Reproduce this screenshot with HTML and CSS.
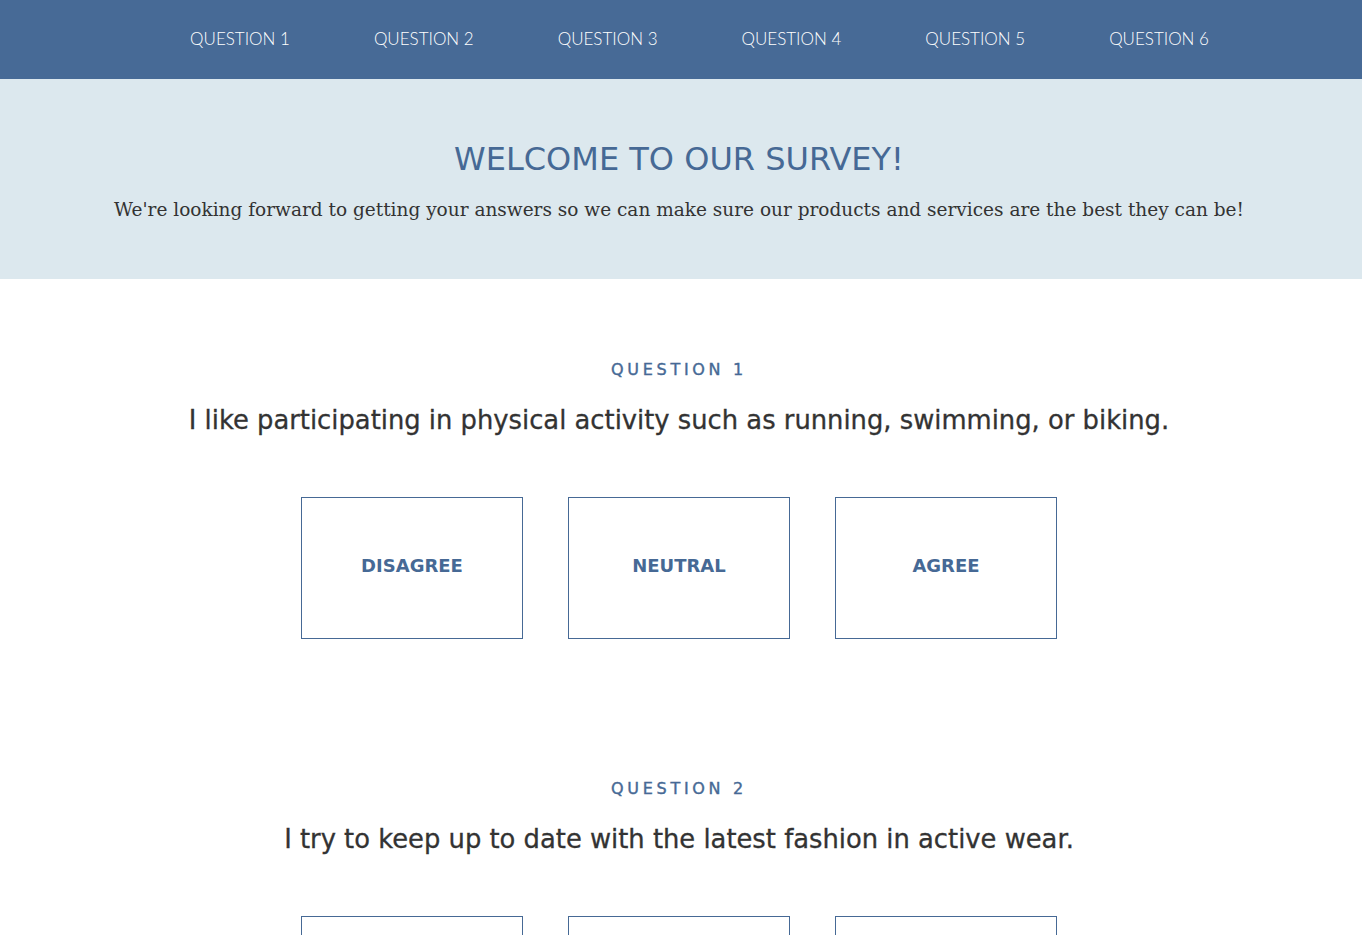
FILE: index.html
```html
<!DOCTYPE html>
<html>
<head>
<meta charset="utf-8">
<link rel="stylesheet" href="styles.css">
</head>
<body>
<nav class="topnav">
  <ul class="nav-list">
    <li><a href="#q1">QUESTION 1</a></li>
    <li><a href="#q2">QUESTION 2</a></li>
    <li><a href="#q3">QUESTION 3</a></li>
    <li><a href="#q4">QUESTION 4</a></li>
    <li><a href="#q5">QUESTION 5</a></li>
    <li><a href="#q6">QUESTION 6</a></li>
  </ul>
</nav>
<header class="hero">
  <h1 class="hero-title">WELCOME TO OUR SURVEY!</h1>
  <p class="hero-sub">We're looking forward to getting your answers so we can make sure our products and services are the best they can be!</p>
</header>
<main>
  <section class="question" id="q1">
    <h2 class="q-label">QUESTION 1</h2>
    <h3 class="q-text">I like participating in physical activity such as running, swimming, or biking.</h3>
    <div class="answers">
      <div class="answer">DISAGREE</div>
      <div class="answer">NEUTRAL</div>
      <div class="answer">AGREE</div>
    </div>
  </section>
  <section class="question" id="q2">
    <h2 class="q-label">QUESTION 2</h2>
    <h3 class="q-text">I try to keep up to date with the latest fashion in active wear.</h3>
    <div class="answers">
      <div class="answer">DISAGREE</div>
      <div class="answer">NEUTRAL</div>
      <div class="answer">AGREE</div>
    </div>
  </section>
</main>
</body>
</html>
```
FILE: styles.css
```css
* { box-sizing: border-box; }
body {
  margin: 0;
  font-family: "DejaVu Sans", sans-serif;
  color: #333;
  background: #fff;
}
.topnav {
  background: #476a96;
  height: 79px;
  display: flex;
  align-items: center;
  justify-content: center;
  padding-left: 37px;
  padding-bottom: 2px;
}
.nav-list {
  list-style: none;
  margin: 0;
  padding: 0;
  display: flex;
  gap: 84px;
}
.nav-list a {
  color: #fff;
  text-decoration: none;
  font-family: Lato, sans-serif;
  font-weight: 300;
  font-size: 17px;
}
.hero {
  background: #dce8ee;
  height: 200px;
  text-align: center;
  padding-top: 61px;
  padding-right: 4px;
}
.hero-title {
  margin: 0;
  font-weight: normal;
  font-size: 32px;
  line-height: 38px;
  color: #466995;
}
.hero-sub {
  margin: 20px 0 0;
  font-family: "DejaVu Serif", serif;
  font-size: 18.5px;
  line-height: 24px;
  color: #333;
}
.question {
  text-align: center;
  padding-top: 79px;
  padding-bottom: 59px;
  padding-right: 4px;
}
.q-label {
  margin: 0;
  font-size: 16px;
  font-weight: normal;
  -webkit-text-stroke: 0.4px #466995;
  letter-spacing: 3.7px;
  color: #466995;
  line-height: 24px;
}
.q-text {
  margin: 22px 0 0;
  font-size: 25.8px;
  font-weight: normal;
  -webkit-text-stroke: 0.3px #333;
  line-height: 32px;
  color: #333;
}
.answers {
  display: flex;
  justify-content: center;
  gap: 45px;
  margin-top: 61px;
}
.answer {
  width: 222px;
  height: 142px;
  border: 1px solid #466995;
  display: flex;
  align-items: center;
  justify-content: center;
  padding-bottom: 6px;
  color: #466995;
  font-weight: bold;
  font-size: 18px;
}
```
